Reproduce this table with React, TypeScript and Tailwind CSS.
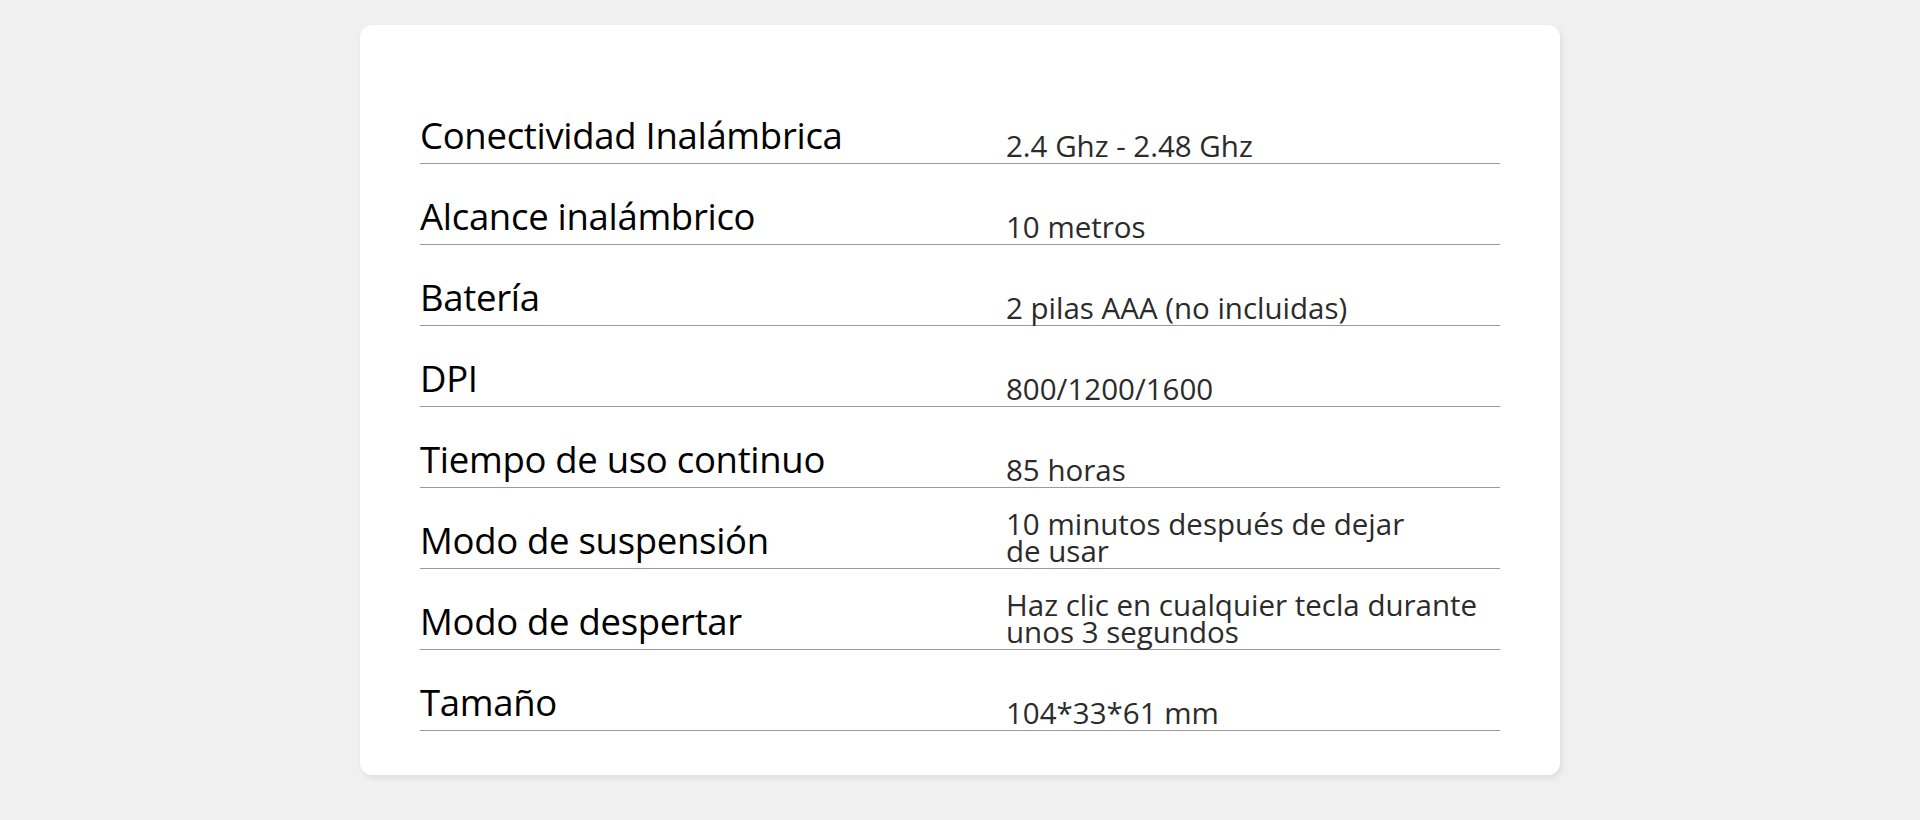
import React from 'react';

const specs: { label: string; value: React.ReactNode }[] = [
  { label: 'Conectividad Inalámbrica', value: '2.4 Ghz - 2.48 Ghz' },
  { label: 'Alcance inalámbrico', value: '10 metros' },
  { label: 'Batería', value: '2 pilas AAA (no incluidas)' },
  { label: 'DPI', value: '800/1200/1600' },
  { label: 'Tiempo de uso continuo', value: '85 horas' },
  {
    label: 'Modo de suspensión',
    value: (
      <>
        10 minutos después de dejar
        <br />
        de usar
      </>
    ),
  },
  {
    label: 'Modo de despertar',
    value: (
      <>
        Haz clic en cualquier tecla durante
        <br />
        unos 3 segundos
      </>
    ),
  },
  { label: 'Tamaño', value: '104*33*61 mm' },
];

export default function App() {
  return (
    <div className="min-h-[820px] bg-[#f0f0f0] pt-[25px] font-['Open_Sans',sans-serif]">
      <div className="mx-auto w-[1200px] rounded-xl bg-white px-[60px] pt-[58px] pb-[44px] shadow-[2px_3px_6px_rgba(0,0,0,0.08)]">
        {specs.map(({ label, value }) => (
          <div
            key={label}
            className="flex h-[81px] items-end border-b border-[#9a9a9a]"
          >
            <div className="w-[586px] shrink-0 pb-[10px] text-[36.5px] leading-none tracking-[-0.3px] text-black">
              {label}
            </div>
            <div className="pb-[4px] text-[29.5px] leading-[27px] text-[#2b2b2b]">
              {value}
            </div>
          </div>
        ))}
      </div>
    </div>
  );
}
